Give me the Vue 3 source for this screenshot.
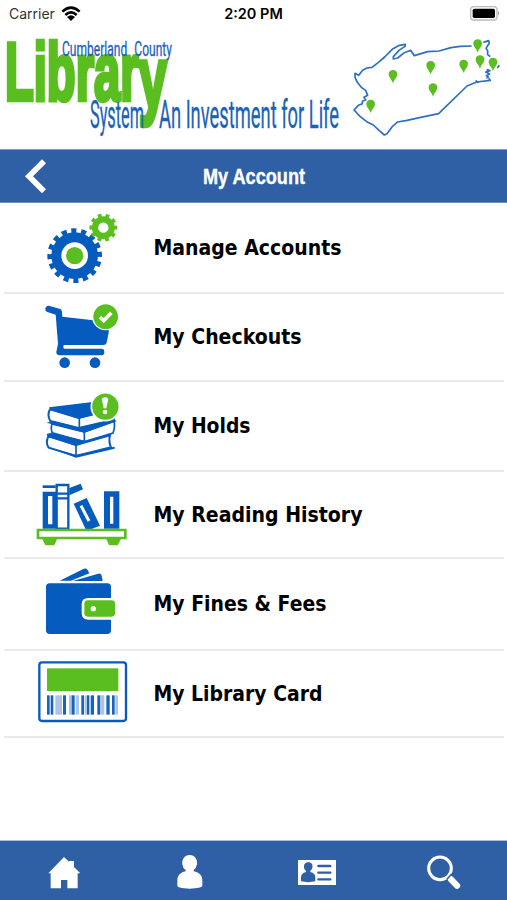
<script setup>
const rows = [
    { icon: 'gears', label: 'Manage Accounts', height: 91, shift: -9, width: 188 },
    { icon: 'cart', label: 'My Checkouts', height: 88, shift: -5, width: 148 },
    { icon: 'books', label: 'My Holds', height: 90, shift: -5, width: 97 },
    { icon: 'shelf', label: 'My Reading History', height: 87, shift: -5, width: 209 },
    { icon: 'wallet', label: 'My Fines & Fees', height: 92, shift: -5, width: 173 },
    { icon: 'card', label: 'My Library Card', height: 87, shift: 0, width: 169 },
]

// x, y of the pin head centre
const pins = [[429, 224], [542, 197], [641, 193], [683, 132], [690, 180], [729, 187], [549, 264], [362, 313]]

// x, width, light bar or not
const bars = [
    [81, 8], [92, 8], [106, 20, true], [129, 9], [147, 8, true], [155, 9], [167, 10, true],
    [184, 8], [194, 4, true], [200, 8], [212, 10], [232, 9], [242, 11, true], [259, 10], [276, 8], [286, 8, true],
]
</script>

<template>
    <div class="page">
        <div class="status">
            <div class="carrier">
                <span>Carrier</span>
                <svg width="20" height="16" viewBox="0 0 60 48">
                    <path d="M4 17Q30-7 56 17M13 27Q30 11 47 27" fill="none" stroke="#000" stroke-width="7.5" />
                    <path d="M18 33Q30 23 42 33L30 45Z" />
                </svg>
            </div>
            <span class="time">2:20 PM</span>
            <svg class="battery" width="31" height="15" viewBox="0 0 93 45">
                <rect x="2" y="2" width="79" height="40" rx="10" fill="#fff" stroke="#bbb" stroke-width="4" />
                <rect x="8" y="8" width="67" height="28" rx="5" />
                <path d="M84 15q7 7 0 14z" fill="#aaa" />
            </svg>
        </div>

        <svg class="banner" width="507" height="121" viewBox="0 28 507 121">
            <text class="library" x="5" y="100" textLength="162" lengthAdjust="spacingAndGlyphs">Librar<tspan
                    class="tail" dy="8">y</tspan></text>
            <g class="tagline">
                <text x="62" y="56" font-size="20" textLength="110" lengthAdjust="spacingAndGlyphs"
                    word-spacing="7">Cumberland County</text>
                <text x="90" y="128" font-size="38" textLength="54" lengthAdjust="spacingAndGlyphs">System</text>
                <text x="159" y="128" font-size="38" textLength="180" lengthAdjust="spacingAndGlyphs">An Investment for Life</text>
            </g>
            <g transform="translate(250 0) scale(.33333)">
                <g class="outline">
                    <path d="M665 138L630 139L603 143L567 153L533 155L493 167L482 151L463 158L443 174L430 177L430 170L447 151L465 139L466 133L448 136L429 146L404 171L388 185L366 202L351 204L338 211L326 226L315 220L315 232L322 247L335 263L347 271L353 286L342 292L347 300L338 303L336 312L325 316L312 330L330 349L353 367L370 375L387 391L403 405L411 401L426 381L443 366L471 361L512 352L566 341L582 325L651 258L680 246L721 241L716 235" />
                    <path d="M700 127L716 122L718 129L708 145L713 152L713 164L721 170" />
                    <path d="M710 209L720 212L707 216L719 222L709 227L715 231L709 235M677 241L685 249M742 204L748 196" />
                </g>
                <path v-for="p in pins" :key="p[0]" class="pin" :transform="`translate(${p[0]} ${p[1]})`"
                    d="M0 26C-5 12-13 8-13-2C-13-18 13-18 13-2C13 8 5 12 0 26Z" />
            </g>
        </svg>

        <header class="titlebar">
            <svg class="back" width="24" height="36" viewBox="0 0 72 108">
                <path d="M63 10L18 55L63 100" fill="none" stroke="#fff" stroke-width="17" />
            </svg>
            <svg class="title" width="104" height="30" viewBox="0 0 104 30">
                <text x="1" y="23" textLength="102" lengthAdjust="spacingAndGlyphs">My Account</text>
            </svg>
        </header>

        <main class="menu">
            <div v-for="row in rows" :key="row.icon" class="row" :style="{ height: row.height + 'px' }">
                <svg width="130" :height="row.height" :viewBox="`0 ${row.shift} 390 ${row.height * 3}`">
                    <g v-if="row.icon == 'gears'">
                        <circle class="blue" cx="164" cy="152" r="70" />
                        <circle cx="164" cy="152" r="74" fill="none" stroke="#065bbe" stroke-width="16" pathLength="32"
                            stroke-dasharray="1.050 .950" transform="rotate(-9 164 152)" />
                        <circle cx="164" cy="152" r="40" fill="#fff" />
                        <circle class="green" cx="164" cy="152" r="26" />
                        <circle cx="250" cy="68" r="25" fill="none" stroke="#5bbe20" stroke-width="19" />
                        <circle cx="250" cy="68" r="37" fill="none" stroke="#5bbe20" stroke-width="10" pathLength="20"
                            stroke-dasharray="1 1" transform="rotate(-9 250 68)" />
                    </g>
                    <g v-else-if="row.icon == 'cart'">
                        <path class="blue" d="M86 33L121 43Q125 45 126 52L127 66L220 77L267 108L260 144Q258 151 250 151H134Q130 151 130 155V158Q130 162 134 162H245Q253 162 253 172Q253 182 245 182H119Q109 182 109 172L114 147L107 60L82 52Q75 49 76 41Q78 32 86 33Z" />
                        <circle class="blue" cx="134" cy="204" r="16" />
                        <circle class="blue" cx="225" cy="204" r="16" />
                        <circle class="green" cx="257" cy="66" r="39" stroke="#fff" stroke-width="4" />
                        <path d="M240 67L251 78L274 54" fill="none" stroke="#fff" stroke-width="11" />
                    </g>
                    <g v-else-if="row.icon == 'books'">
                        <path d="M90 80L176 106L281 79V112L176 136L91 115Q80 98 90 80Z" fill="#fff" stroke="#065bbe"
                            stroke-width="6" />
                        <path class="blue" d="M87 74L218 58V88L280 82L177 108L91 80Z" />
                        <path d="M96 124L192 148L282 116Q286 131 279 151L194 177L98 154Q91 137 96 124Z" fill="#fff"
                            stroke="#065bbe" stroke-width="5" />
                        <path class="blue" d="M80 120L98 115L177 135L282 109L290 116L194 150Z" />
                        <path d="M86 160L168 187L270 158Q265 178 273 194L168 220L86 195Q75 179 86 160Z" fill="#fff"
                            stroke="#065bbe" stroke-width="6" />
                        <path class="blue" d="M80 154L100 149L194 175L282 150L168 190L83 163ZM80 192L168 217L284 192V198L168 225Z" />
                        <path d="M178 105V134M193 148V176M168 187V220" stroke="#065bbe" stroke-width="5" />
                        <circle class="green" cx="256" cy="72" r="42" stroke="#fff" stroke-width="5" />
                        <path d="M245 48Q255 40 265 48L259 77H251Z" fill="#fff" />
                        <circle cx="255" cy="88" r="7" fill="#fff" />
                    </g>
                    <g v-else-if="row.icon == 'shelf'">
                        <path class="blue" fill-rule="evenodd" d="M68 57H109V168H68ZM84 70V155H97V70Z" />
                        <path class="blue" d="M68 38H107V46H68Z" />
                        <path d="M110 37H145V168H110ZM110 63H145M110 77H145" fill="#fff" stroke="#065bbe" stroke-width="7" />
                        <path class="blue" d="M148 46L182 33L189 50L148 68Z" />
                        <path class="blue" fill-rule="evenodd" d="M161 93L200 76L240 159L207 172H198ZM179 101L203 147L211 143L187 97Z" />
                        <path class="blue" fill-rule="evenodd" d="M252 56H298V168H252ZM270 72V153H280V72Z" />
                        <path d="M54 172H316V196H54Z" fill="#fff" stroke="#5bbe20" stroke-width="8" />
                        <path class="green" d="M66 197H112L103 218H76ZM258 197H304L293 218H267Z" />
                    </g>
                    <g v-else-if="row.icon == 'wallet'">
                        <path class="blue" d="M119 63L190 28Q198 24 203 31L208 41L153 63ZM158 64L235 42Q243 40 245 48L248 64Z" />
                        <rect class="blue" x="78" y="71" width="195" height="152" rx="11" />
                        <path d="M275 115H205Q185 115 185 134V160Q185 180 205 180H275Z" fill="#fff" />
                        <rect class="green" x="193" y="122" width="92" height="49" rx="10" />
                        <circle cx="220" cy="147" r="8" fill="#fff" />
                    </g>
                    <g v-else>
                        <rect x="58" y="37" width="260" height="176" rx="8" fill="#fff" stroke="#065bbe" stroke-width="7" />
                        <rect class="green" x="81" y="55" width="214" height="68" />
                        <rect v-for="b in bars" :key="b[0]" :x="b[0]" y="136" :width="b[1]" height="58"
                            :fill="b[2] ? '#a9c5e8' : '#1764ba'" />
                    </g>
                </svg>
                <svg class="label" width="230" height="30" viewBox="0 0 230 30">
                    <text x="3.500" y="22" :textLength="row.width" lengthAdjust="spacingAndGlyphs">{{ row.label }}</text>
                </svg>
            </div>
        </main>

        <nav class="tabs">
            <svg viewBox="0 0 114 120">
                <path d="M13 70L60 21L75 35V33H90V51L109 70H101V115H70V90H51V115H20V70Z" />
            </svg>
            <svg viewBox="0 0 114 120">
                <path d="M56 15C72 15 80 29 78 43Q76 54 68 60V64C86 68 94 76 94 92V108Q92 115 56 116Q20 115 19 108V92C19 76 27 68 44 64V60Q35 54 34 43C32 29 40 15 56 15Z" />
            </svg>
            <svg viewBox="0 0 114 120">
                <path d="M0 30H114V105H0Z" />
                <path class="cut" d="M31 37C41 37 45 44 43 53Q42 59 37 62V66Q52 70 52 82V94Q31 99 9 94V82Q9 70 24 66V62Q19 59 18 53C17 44 21 37 31 37Z" />
                <path d="M61 48H97M61 68H97M61 88H97" fill="none" stroke="#2f60a5" stroke-width="7" stroke-linecap="round" />
            </svg>
            <svg viewBox="0 0 114 120">
                <circle cx="45" cy="55" r="34" fill="none" stroke="#fff" stroke-width="9" />
                <path d="M78 88L96 107" fill="none" stroke="#fff" stroke-width="19" stroke-linecap="round" />
                <path class="cut" d="M64 86L79 70L82 73L67 90Z" />
            </svg>
        </nav>
    </div>
</template>

<style>
body {
    margin: 0;
    background: #fff;
}
</style>

<style scoped>
.page {
    display: flex;
    flex-direction: column;
    width: 507px;
    height: 900px;
    overflow: hidden;
    background: #fff;
    font-family: Inter, "Liberation Sans", sans-serif;
}

svg {
    display: block;
    flex: none;
}

.status {
    display: grid;
    grid-template-columns: 1fr auto 1fr;
    align-items: center;
    height: 28px;
    box-sizing: border-box;
    padding: 0 6px 1px 9px;
    font-size: 14px;
}

.carrier {
    display: flex;
    align-items: center;
    gap: 6px;
    color: #333;
}

.time {
    margin-right: 3px;
    font-weight: 600;
    font-size: 14.5px;
}

.battery {
    justify-self: end;
}

.library {
    fill: #5bbe20;
    stroke: #5bbe20;
    stroke-width: 4.5px;
    font: bold 81px "Liberation Sans", sans-serif;
}

.tail {
    font-size: 88px;
}

.tagline {
    fill: #1b62b9;
    stroke: #1b62b9;
    stroke-width: .3px;
    font-family: Roboto, sans-serif;
}

.outline {
    fill: none;
    stroke: #2d6fc5;
    stroke-width: 5px;
    stroke-linejoin: round;
}

.pin {
    fill: #5bbe20;
}

.titlebar {
    display: grid;
    grid-template-columns: 1fr auto 1fr;
    align-items: center;
    height: 54px;
    box-sizing: border-box;
    background: #2f60a5;
    border-top: 1px solid #7f9fc9;
    border-bottom: 1px solid #6f92c2;
}

.back {
    margin-left: 23px;
}

.title {
    fill: #fff;
    stroke: #fff;
    stroke-width: .4px;
    font: bold 22px "Liberation Sans", sans-serif;
}

.menu {
    flex: 1;
    padding: 0 3px 0 4px;
}

.row {
    display: flex;
    align-items: center;
    box-sizing: border-box;
    padding-left: 16px;
    border-bottom: 2px solid #e9e9e9;
}

.blue {
    fill: #065bbe;
}

.green {
    fill: #5bbe20;
}

.label {
    font: bold 20.5px "DejaVu Sans", sans-serif;
}

.tabs {
    display: grid;
    grid-template-columns: repeat(4, 1fr);
    align-items: center;
    justify-items: center;
    height: 60px;
    box-sizing: border-box;
    padding-bottom: 2px;
    background: #2f60a5;
    border-top: 1px solid #a9bdd9;
}

.tabs svg {
    width: 38px;
    height: 40px;
    fill: #fff;
}

.tabs .cut {
    fill: #2f60a5;
}
</style>
